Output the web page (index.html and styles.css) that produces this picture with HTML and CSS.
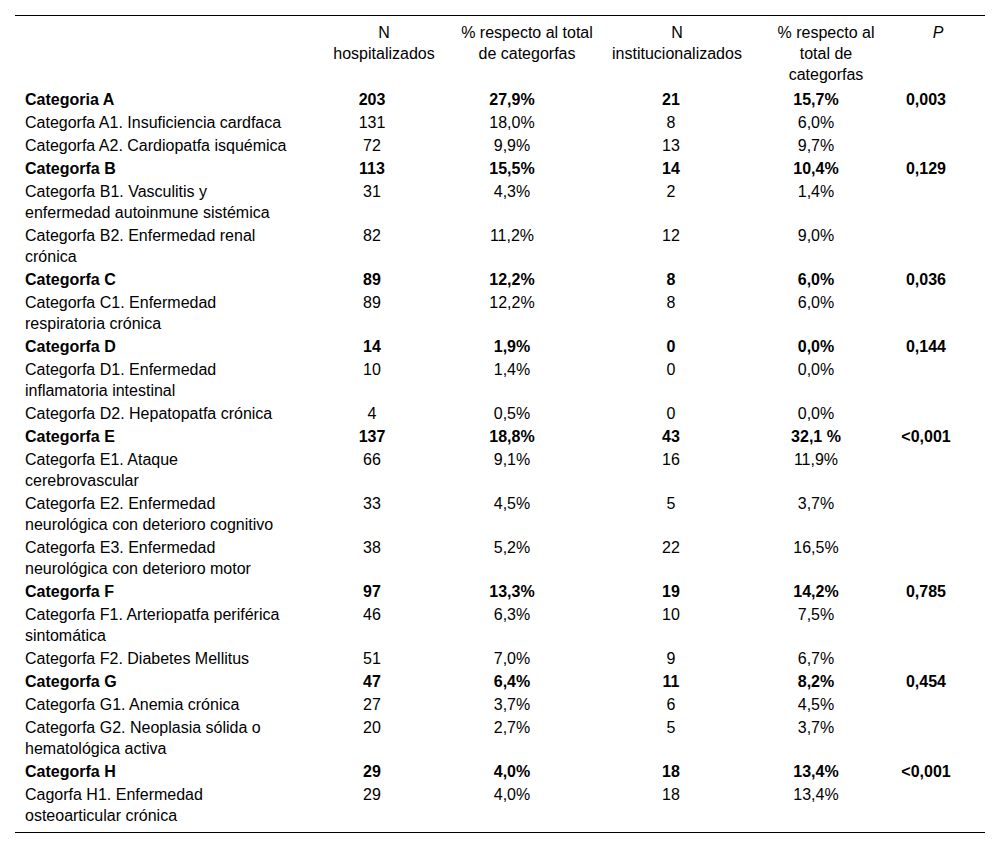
FILE: index.html
```html
<!DOCTYPE html>
<html lang="es">
<head>
<meta charset="utf-8">
<title>Categorías</title>
<link rel="stylesheet" href="styles.css">
</head>
<body>
<div class="page">
<table class="tbl">
<colgroup>
<col class="w1"><col class="w2"><col class="w3"><col class="w4"><col class="w5"><col class="w6">
</colgroup>
<thead>
<tr>
<th class="h1"></th>
<th class="h2">N<br>hospitalizados</th>
<th class="h3">% respecto al total de categorfas</th>
<th class="h4">N<br>institucionalizados</th>
<th class="h5">% respecto al total de categorfas</th>
<th class="h6"><i>P</i></th>
</tr>
</thead>
<tbody>
<tr class="cat"><td class="l">Categoria A</td><td class="d2">203</td><td class="d3">27,9%</td><td class="d4">21</td><td class="d5">15,7%</td><td class="d6">0,003</td></tr>
<tr><td class="l">Categorfa A1. Insuficiencia cardfaca</td><td class="d2">131</td><td class="d3">18,0%</td><td class="d4">8</td><td class="d5">6,0%</td><td class="d6"></td></tr>
<tr><td class="l">Categorfa A2. Cardiopatfa isquémica</td><td class="d2">72</td><td class="d3">9,9%</td><td class="d4">13</td><td class="d5">9,7%</td><td class="d6"></td></tr>
<tr class="cat"><td class="l">Categorfa B</td><td class="d2">113</td><td class="d3">15,5%</td><td class="d4">14</td><td class="d5">10,4%</td><td class="d6">0,129</td></tr>
<tr><td class="l">Categorfa B1. Vasculitis y enfermedad autoinmune sistémica</td><td class="d2">31</td><td class="d3">4,3%</td><td class="d4">2</td><td class="d5">1,4%</td><td class="d6"></td></tr>
<tr><td class="l">Categorfa B2. Enfermedad renal crónica</td><td class="d2">82</td><td class="d3">11,2%</td><td class="d4">12</td><td class="d5">9,0%</td><td class="d6"></td></tr>
<tr class="cat"><td class="l">Categorfa C</td><td class="d2">89</td><td class="d3">12,2%</td><td class="d4">8</td><td class="d5">6,0%</td><td class="d6">0,036</td></tr>
<tr><td class="l">Categorfa C1. Enfermedad respiratoria crónica</td><td class="d2">89</td><td class="d3">12,2%</td><td class="d4">8</td><td class="d5">6,0%</td><td class="d6"></td></tr>
<tr class="cat"><td class="l">Categorfa D</td><td class="d2">14</td><td class="d3">1,9%</td><td class="d4">0</td><td class="d5">0,0%</td><td class="d6">0,144</td></tr>
<tr><td class="l">Categorfa D1. Enfermedad inflamatoria intestinal</td><td class="d2">10</td><td class="d3">1,4%</td><td class="d4">0</td><td class="d5">0,0%</td><td class="d6"></td></tr>
<tr><td class="l">Categorfa D2. Hepatopatfa crónica</td><td class="d2">4</td><td class="d3">0,5%</td><td class="d4">0</td><td class="d5">0,0%</td><td class="d6"></td></tr>
<tr class="cat"><td class="l">Categorfa E</td><td class="d2">137</td><td class="d3">18,8%</td><td class="d4">43</td><td class="d5">32,1 %</td><td class="d6">&lt;0,001</td></tr>
<tr><td class="l">Categorfa E1. Ataque cerebrovascular</td><td class="d2">66</td><td class="d3">9,1%</td><td class="d4">16</td><td class="d5">11,9%</td><td class="d6"></td></tr>
<tr><td class="l">Categorfa E2. Enfermedad neurológica con deterioro cognitivo</td><td class="d2">33</td><td class="d3">4,5%</td><td class="d4">5</td><td class="d5">3,7%</td><td class="d6"></td></tr>
<tr><td class="l">Categorfa E3. Enfermedad neurológica con deterioro motor</td><td class="d2">38</td><td class="d3">5,2%</td><td class="d4">22</td><td class="d5">16,5%</td><td class="d6"></td></tr>
<tr class="cat"><td class="l">Categorfa F</td><td class="d2">97</td><td class="d3">13,3%</td><td class="d4">19</td><td class="d5">14,2%</td><td class="d6">0,785</td></tr>
<tr><td class="l">Categorfa F1. Arteriopatfa periférica sintomática</td><td class="d2">46</td><td class="d3">6,3%</td><td class="d4">10</td><td class="d5">7,5%</td><td class="d6"></td></tr>
<tr><td class="l">Categorfa F2. Diabetes Mellitus</td><td class="d2">51</td><td class="d3">7,0%</td><td class="d4">9</td><td class="d5">6,7%</td><td class="d6"></td></tr>
<tr class="cat"><td class="l">Categorfa G</td><td class="d2">47</td><td class="d3">6,4%</td><td class="d4">11</td><td class="d5">8,2%</td><td class="d6">0,454</td></tr>
<tr><td class="l">Categorfa G1. Anemia crónica</td><td class="d2">27</td><td class="d3">3,7%</td><td class="d4">6</td><td class="d5">4,5%</td><td class="d6"></td></tr>
<tr><td class="l">Categorfa G2. Neoplasia sólida o hematológica activa</td><td class="d2">20</td><td class="d3">2,7%</td><td class="d4">5</td><td class="d5">3,7%</td><td class="d6"></td></tr>
<tr class="cat"><td class="l">Categorfa H</td><td class="d2">29</td><td class="d3">4,0%</td><td class="d4">18</td><td class="d5">13,4%</td><td class="d6">&lt;0,001</td></tr>
<tr class="last"><td class="l">Cagorfa H1. Enfermedad osteoarticular crónica</td><td class="d2">29</td><td class="d3">4,0%</td><td class="d4">18</td><td class="d5">13,4%</td><td class="d6"></td></tr>
</tbody>
</table>
</div>
</body>
</html>
```

FILE: styles.css
```css
html, body {
  margin: 0;
  padding: 0;
  background: #fff;
}

.page {
  padding: 15px 15px 0 15px;
}

.tbl {
  width: 970px;
  border-collapse: collapse;
  table-layout: fixed;
  font-family: "Liberation Sans", Arial, sans-serif;
  font-size: 16px;
  line-height: 21px;
  color: #000;
  border-top: 1px solid #000;
  border-bottom: 1px solid #000;
}

.w1 { width: 295px; }
.w2 { width: 148px; }
.w3 { width: 138px; }
.w4 { width: 162px; }
.w5 { width: 136px; }
.w6 { width: 91px; }

.tbl th {
  font-weight: normal;
  text-align: center;
  vertical-align: top;
  padding: 6px 0 3px 0;
}

.tbl th.h5 {
  padding-left: 10px;
  padding-right: 10px;
}

.tbl th.h6 {
  padding-right: 3px;
}

.tbl td {
  vertical-align: top;
  padding: 1px 0;
  text-align: center;
}

.tbl td.l {
  text-align: left;
  padding-left: 10px;
  padding-right: 17px;
}

.tbl td.d2 { padding-right: 24px; }
.tbl td.d3 { padding-right: 30px; }
.tbl td.d4 { padding-right: 12px; }
.tbl td.d5 { padding-left: 10px; padding-right: 30px; }
.tbl td.d6 { padding-right: 27px; }

.cat td {
  font-weight: bold;
}

.last td {
  padding-bottom: 6px;
}
```
